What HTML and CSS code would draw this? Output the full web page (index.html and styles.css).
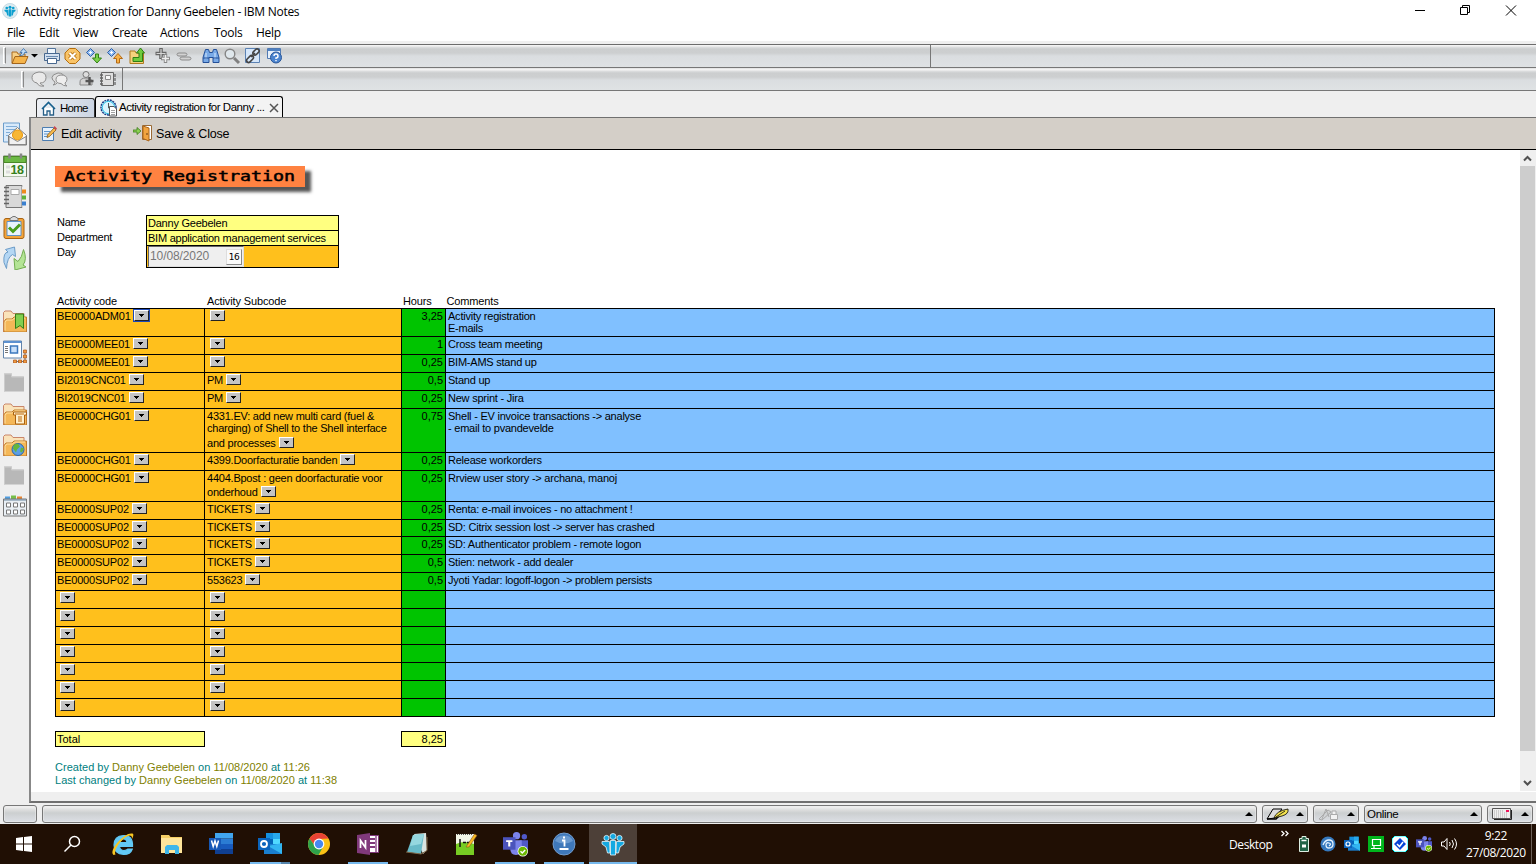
FILE: index.html
```html
<!DOCTYPE html>
<html lang="en">
<head>
<meta charset="utf-8">
<title>Activity registration for Danny Geebelen - IBM Notes</title>
<link rel="stylesheet" href="styles.css">
</head>
<body>
<svg class="defs" width="0" height="0">
  <symbol id="notes" viewBox="0 0 24 24">
    <circle cx="12" cy="4.500" r="3"/><circle cx="5.500" cy="6" r="2.600"/><circle cx="18.500" cy="6" r="2.600"/>
    <path d="M9.500 8.500h5v14.500h-5zM1 9.500h7.500L9 21H6.500L5 15 1 12zM23 9.500h-7.500L15 21h2.500L19 15l4-3z"/>
  </symbol>
  <symbol id="outlook" viewBox="0 0 24 24">
    <path fill="#1490df" d="M8 1h14v13H8z"/><path fill="#28a8ea" d="M15 1h7v6h-7z"/><path fill="#50d9ff" d="M15 7h7v6h-7z"/><path fill="#0364b8" d="M8 7h7v6H8z"/>
    <path fill="#1a7fd0" d="M6 12l18 0v10H6z"/><path fill="#32b5f1" d="M24 11v11L10 14z"/>
    <path fill="#0a64bd" d="M0 6h12v12H0z"/><circle cx="6" cy="12" r="3" fill="none" stroke="#fff" stroke-width="1.800"/>
  </symbol>
  <symbol id="teams" viewBox="0 0 24 24">
    <circle cx="13" cy="3.500" r="3.500" fill="#7b83eb"/><circle cx="20.500" cy="4.500" r="2.600" fill="#5059c9"/>
    <path fill="#5059c9" d="M16 8h8v7q0 4-4 4h-4z"/><path fill="#7b83eb" d="M7 8h11v8q0 6-5.500 6T7 16z"/>
    <path fill="#4b53bc" d="M0 5h12v12H0z"/><path fill="#fff" d="M3 8h6v1.700H7V14H5V9.700H3z"/>
    <circle cx="19" cy="18.500" r="5" fill="#fff"/><circle cx="19" cy="18.500" r="4.300" fill="#6bb700"/><path d="M16.800 18.500l1.700 1.700 2.800-3" fill="none" stroke="#fff" stroke-width="1.300"/>
  </symbol>
  <symbol id="folder" viewBox="0 0 24 24">
    <path d="M.5 23.500V4L2 2.500h6L10 5h11v18z" fill="#fae3ba" stroke="#c9866a"/>
    <path d="M1 23.500V13l2-2.500h6L11 8.500h12.500v15z" fill="#f4b757" stroke="#c17c2c"/><path d="M2 22V14l1.500-2.500H9.500l2-2H22" fill="none" stroke="#ffe2a6"/>
  </symbol>
  <symbol id="grayfolder" viewBox="0 0 24 24"><path d="M1 3h8v3h12v15H1z" fill="#b8b8b8"/><path d="M1.500 21V3.500h7v3h12" fill="none" stroke="#ccc"/></symbol>
</svg>

<header class="titlebar">
  <svg class="applogo" width="16" height="16" viewBox="0 0 16 16"><circle cx="8" cy="8" r="7.500" fill="#dcebf1" stroke="#c5dbe4"/><use href="#notes" x="2" y="2" width="12" height="12" fill="#0c9fcf"/></svg>
  <span class="ui apptitle">Activity registration for Danny Geebelen - IBM Notes</span>
  <svg class="winbtns" width="120" height="22" viewBox="0 0 120 22" fill="none" stroke="#000"><path d="M0 9.500h10M45.500 6.500h7v7h-7zM47.500 6.500v-2h7v7h-2"/><path d="M91 4.500l10 10M101 4.500l-10 10"/></svg>
</header>
<nav class="menu ui"><span>File</span><span>Edit</span><span>View</span><span>Create</span><span>Actions</span><span>Tools</span><span>Help</span></nav>

<div class="toolbar first">
  <i class="grip"></i>
  <svg class="t-open" width="18" height="18" viewBox="0 0 18 18"><path d="M1 16V5h5l1 2h7v9z" fill="#f6cf86" stroke="#a96a20"/><path d="M1 16.500l3-7h13l-3 7z" fill="#f5b44b" stroke="#a3651c"/><path d="M8.500 8.500h2q3 0 3-3h2.500L12.500 1.500 9 5.500h2q0 1.500-2.500 3z" fill="#bfdcf7" stroke="#3569a6" stroke-width=".8"/></svg>
  <svg class="t-arr" width="8" height="18"><path d="M0 7h7L3.500 10.500z" fill="#000"/></svg>
  <svg class="t-print" width="18" height="18" viewBox="0 0 18 18"><path d="M4.500 7V1.500h8V7" fill="#eef5fc" stroke="#55759b"/><path d="M1.500 6.500h15v7h-15z" fill="#d3e0ef" stroke="#48688f"/><path d="M4.500 11.500h9v5h-9z" fill="#fff" stroke="#48688f"/><path d="M3 9.500h12" stroke="#6a8ab0"/></svg>
  <svg class="t-stop" width="18" height="18" viewBox="0 0 18 18"><path d="M5.500 1.500h6l4.500 4.500v6l-4.500 4.500h-6L1 12V6z" fill="#f9c468" stroke="#b56f0f"/><path d="M5.500 6l6 6M11.500 6l-6 6" stroke="#b56f0f" stroke-width="3.800"/><path d="M5.500 6l6 6M11.500 6l-6 6" stroke="#fff" stroke-width="2"/></svg>
  <svg class="t-dn" width="18" height="18" viewBox="0 0 18 18"><path d="M5.500 1.500l4 4-4 4-4-4z" fill="#8fbaf0" stroke="#2d5fa8"/><path d="M4 5.500h3M5.500 4v3" stroke="#fff"/><path d="M10.500 7h3v4H16.500L12 16 7.500 11h3z" fill="#7cd04b" stroke="#328014"/></svg>
  <svg class="t-up" width="18" height="18" viewBox="0 0 18 18"><path d="M5.500 1.500l4 4-4 4-4-4z" fill="#8fbaf0" stroke="#2d5fa8"/><path d="M4 5.500h3M5.500 4v3" stroke="#fff"/><path d="M10.500 16h3v-4.500H16.500L12 6.500 7.500 11.500h3z" fill="#f8b247" stroke="#b46a15"/></svg>
  <svg class="t-gf" width="18" height="18" viewBox="0 0 18 18"><path d="M2 16.500V4h5l1 2h7.500v10.500z" fill="#f5d27d" stroke="#b07a20"/><path d="M5 14.500v-4h6V6H8.500l4-5L16.500 6h-2v8.500z" fill="#6fcb3c" stroke="#2e7d14"/></svg>
  <svg class="t-plus" width="18" height="18" viewBox="0 0 18 18"><path d="M7 1v11M1.500 6.500h11" stroke="#666" stroke-width="3.600"/><path d="M7 2v9M2.500 6.500h9" stroke="#d5d5d5" stroke-width="1.200"/><path d="M11.500 7v9M7 11.500h9" stroke="#888" stroke-width="3.400"/><path d="M11.500 8v7M8 11.500h7" stroke="#eee" stroke-width="1.600"/></svg>
  <svg class="t-minus" width="18" height="18" viewBox="0 0 18 18"><path d="M2 7.500q0-1.500 2-1.500h6q2 0 2 1.500T10 9H4Q2 9 2 7.500zM5 11.500q0-1.500 2-1.500h7q2 0 2 1.500T14 13H7q-2 0-2-1.500z" fill="#d2d2d2" stroke="#8a8a8a"/></svg>
  <svg class="t-bino" width="18" height="18" viewBox="0 0 18 18"><path d="M3.500 2.500h3l1 3h3l1-3h3l2.500 8v5h-6v-5h-4v5H1v-5z" fill="#78a9e6" stroke="#234f98"/><path d="M4 6v6M13 6v6" stroke="#d7e9fd"/><path d="M1 11h6M11 11h6" stroke="#234f98"/></svg>
  <svg class="t-mag" width="18" height="18" viewBox="0 0 18 18"><circle cx="7" cy="7" r="4.800" fill="#dfe7ec" stroke="#858585" stroke-width="1.400"/><path d="M11 11l5 5" stroke="#808080" stroke-width="3"/></svg>
  <svg class="t-link" width="18" height="18" viewBox="0 0 18 18"><path d="M1.500 1.500h14v14h-14z" fill="#d6e7fa" stroke="#5b82b4"/><g fill="none" stroke="#444" stroke-width="1.600"><rect x="8.500" y="3" width="7" height="4" rx="2" transform="rotate(-45 12 5)"/><rect x="2" y="10" width="8" height="4" rx="2" transform="rotate(-45 6 12)"/><path d="M7 10l4-4"/></g></svg>
  <svg class="t-help" width="18" height="18" viewBox="0 0 18 18"><path d="M1.500 1.500h13v10h-13z" fill="#e5effa" stroke="#517ab3"/><path d="M2 3h12" stroke="#4f81c2" stroke-width="2"/><circle cx="10" cy="10.500" r="5.500" fill="#4b84cf" stroke="#2a5798"/><path d="M8 9q0-2 2-2t2 2-2 2v1M10 13v1.300" fill="none" stroke="#fff" stroke-width="1.400"/></svg>
</div>
<div class="toolbar second">
  <i class="grip"></i>
  <svg width="18" height="18" viewBox="0 0 18 18"><path d="M9 2q7 0 7 5.500T10 13q1 2 4 3-5 1-7-3Q2 12 2 7.500T9 2z" fill="#e9e9e9" stroke="#8d8d8d"/></svg>
  <svg class="s2" width="18" height="18" viewBox="0 0 18 18"><path d="M8 3q6 0 6 4.500T8 12q-2 3-5 3 2-1 2-3-3-1.500-3-4.500T8 3z" fill="#e0e0e0" stroke="#8d8d8d"/><path d="M11 5q6 0 6 4.500 0 2-2 3.500 0 2 2 3-4 0-6-2.500-5 0-5-4T11 5z" fill="#eee" stroke="#8d8d8d"/></svg>
  <svg class="s3" width="18" height="18" viewBox="0 0 18 18"><circle cx="8" cy="4.500" r="3" fill="#ddd" stroke="#777"/><path d="M2 15v-3q0-4 6-4t6 4v3z" fill="#d3d3d3" stroke="#888"/><path d="M11.500 7v8M7.500 11h8" stroke="#555" stroke-width="2.400"/></svg>
  <svg class="s4" width="18" height="18" viewBox="0 0 18 18"><path d="M2.500 2.500h12v13h-12z" fill="#dedede" stroke="#666"/><path d="M6.500 5.500h5v4h-5z" fill="#f8f8f8" stroke="#888"/><path d="M1 5h3M1 8h3M1 11h3M1 14h3M16 4v3M16 8v3M16 12v3" stroke="#666" stroke-width="1.300"/></svg>
</div>

<main class="window">
  <div class="tabs">
    <div class="tab home"><svg width="15" height="15" viewBox="0 0 15 15"><path d="M2.500 7v7h3.500v-4h3v4h3.500V7" fill="#fff" stroke="#265f88" stroke-width="1.300"/><path d="M1 8l6.500-6.500L14 8" fill="none" stroke="#17608e" stroke-width="1.600"/></svg><span>Home</span></div>
    <div class="tab current"><svg width="18" height="18" viewBox="0 0 18 18"><circle cx="8.500" cy="8.500" r="7.500" fill="#d8f4ff" stroke="#1a3c86" stroke-width="1.500" stroke-dasharray="2 .8"/><circle cx="8.500" cy="8.500" r="6.200" fill="none" stroke="#28bfe5"/><path d="M8.500 4v5l3 2" fill="none" stroke="#555"/><path d="M9.500 7.500h4.500l2.500 2.500v7h-7z" fill="#fff" stroke="#555"/><path d="M11 11.500h4M11 13.500h4M11 15.500h4" stroke="#888" stroke-width=".8"/></svg><span>Activity registration for Danny ...</span><svg class="close" width="10" height="10" viewBox="0 0 10 10"><path d="M1 1l8 8M9 1L1 9" stroke="#555" stroke-width="1.500"/></svg></div>
  </div>
  <aside class="side">
    <svg viewBox="0 0 24 24"><path d="M.5.500h16v19H.5z" fill="#d9eafa" stroke="#6c9dcb"/><path d="M3 4h11M3 7h9M3 10h4M3 13h3" stroke="#80add8"/><path d="M5.500 13L14.500 5 23.500 13v9.500h-18z" fill="#fff" stroke="#777"/><circle cx="14.500" cy="12.500" r="5" fill="#f8b735" stroke="#e8950a"/><path d="M6 14l8.500 5 8.500-5v8H6z" fill="#f1f1f1" stroke="#888"/></svg>
    <svg viewBox="0 0 24 24"><path d="M.5 2.500h23v21H.5z" fill="#f4f9f0" stroke="#6a7f60"/><path d="M1 3h22v6H1z" fill="#6cb944" stroke="#4b8a27"/><path d="M6.500 0v5M18 0v5" stroke="#888" stroke-width="2.500"/><path d="M3 12h4v3H3zM3 17h4v3H3z" fill="#ddd"/><text class="day18" x="7.500" y="20.500">18</text></svg>
    <svg viewBox="0 0 24 24"><path d="M3 1h16v22H3z" fill="#d9d9d9" stroke="#777"/><path d="M20 2v20" stroke="#eee" stroke-width="2"/><path d="M8 5h8v5H8z" fill="#fff" stroke="#aaa"/><path d="M1 3h5M1 7h5M1 11h5M1 15h5M1 19h5" stroke="#666" stroke-width="1.500"/><path d="M19 5h4v4h-4z" fill="#ee8a1d"/><path d="M19 11h4v4h-4z" fill="#5eb23a"/><path d="M19 17h4v4h-4z" fill="#3b80cf"/></svg>
    <svg viewBox="0 0 24 24"><rect x="1" y="3" width="20" height="20" rx="2" fill="#f3a33a" stroke="#a86313"/><path d="M4 6h14v14H4z" fill="#eaf4fd" stroke="#6192c5"/><path d="M7 5V3l3-2h2l3 2v2z" fill="#ddd" stroke="#777"/><path d="M6 12l4 4 7-7" fill="none" stroke="#4a9e1e" stroke-width="3"/></svg>
    <svg viewBox="0 0 24 24"><path d="M1 16Q0 6 5 5.500L2.500 3 11.500.500 12.500 10 9.500 8Q4 11 3.500 22z" fill="#b5d7f4" stroke="#6c9cc8"/><path d="M20.500 3q4 10-.5 15.500l3 2L12 23.500 11 12l4 3q4-4 5.500-12z" fill="#b4e495" stroke="#73ad50"/></svg>
    <i></i>
    <svg viewBox="0 0 24 24"><use href="#folder"/><path d="M12.500 5.500h8V20l-3.500-3-4.500 3z" fill="#83cf50" stroke="#337e17"/></svg>
    <svg viewBox="0 0 24 24"><path d="M.5 1.500h18v17H.5z" fill="#fff" stroke="#6284ab"/><path d="M1 2.500h17" stroke="#5d91d0" stroke-width="2"/><path d="M2 7h3M2 9h3M2 11h3M2 13h3" stroke="#777"/><path d="M7.500 6.500h7v7h-7z" fill="#c9e0fa" stroke="#3d78bd" stroke-width="1.500"/><path d="M22 12v10H12" fill="none" stroke="#777"/><path d="M20.500 10.500h3v3h-3zM20.500 15.500h3v3h-3zM20.500 20.500h3v3h-3zM15.500 20.500h3v3h-3zM10.500 20.500h3v3h-3z" fill="#f39a3d" stroke="#a8551a" stroke-width=".7"/></svg>
    <svg viewBox="0 0 24 24"><use href="#grayfolder"/></svg>
    <svg viewBox="0 0 24 24"><use href="#folder"/><path d="M10.500 10.500h13v3h-2v9h-9v-9h-2z" fill="#fff0cd" stroke="#a96011"/><path d="M12 12.500h9M15 15.500h4M15 17.500h4M15 19.500h4" stroke="#bf6b0c"/></svg>
    <svg viewBox="0 0 24 24"><use href="#folder"/><circle cx="15" cy="17" r="6" fill="#5c9ee5" stroke="#2c65a6"/><path d="M11 12l4-1 2 3-3 3-1 3-3-4zM18 15l3 1-2 4-2-1z" fill="#66b63b"/></svg>
    <svg viewBox="0 0 24 24"><use href="#grayfolder"/></svg>
    <svg viewBox="0 0 24 24"><path d="M2 2h5v3H2z" fill="#4f9de0"/><path d="M8 1h5v4H8z" fill="#76be48"/><path d="M14 2h5v3h-5z" fill="#e68433"/><path d="M.5 4.500h23v17H.5z" fill="#eaf0f5" stroke="#777"/><path d="M1 5.500h22" stroke="#66839e"/><path d="M3.500 8.500h4v4h-4zM10.500 8.500h4v4h-4zM17.500 8.500h4v4h-4zM3.500 15.500h4v4h-4zM10.500 15.500h4v4h-4zM17.500 15.500h4v4h-4z" fill="#fff" stroke="#777"/></svg>
  </aside>
  <section class="pane">
    <div class="actions">
      <svg width="16" height="16" viewBox="0 0 16 16"><path d="M1.500 1.500h11v13h-11z" fill="#e5f1fc" stroke="#4d7db0"/><path d="M3 5.500h6M3 8h5M3 10.500h4" stroke="#5c95cf"/><path d="M6 11.500L6.500 9 13 2l2 2-6.500 6.500z" fill="#f6b94c" stroke="#8a5c1c" stroke-width=".8"/><path d="M12.500 1.500l1-1.500L16 2.500l-1 1.500z" fill="#cc4653"/></svg>
      <span class="edit">Edit activity</span>
      <svg class="door" width="19" height="17" viewBox="0 0 19 17"><path d="M0 5h4V2.500l4 3.500-4 3.500V7H0z" fill="#8ad152" stroke="#3c7b1b" stroke-width=".8"/><path d="M9.500.500h9v14h-9z" fill="#fff" stroke="#9b6a35"/><path d="M10 1l6 2v13L10 13.500z" fill="#f2a43e" stroke="#aa641a"/><path d="M14 8v2" stroke="#663b0c"/></svg>
      <span class="save">Save &amp; Close</span>
    </div>
    <div class="scroller">
      <article class="doc">
        <h1><span>Activity Registration</span></h1>
        <div class="form">
          <div class="labels"><div>Name</div><div>Department</div><div>Day</div></div>
          <div class="values"><div class="v1">Danny Geebelen</div><div class="v2">BIM application management services</div><div class="dayrow"><div class="date"><span>10/08/2020</span><b>16</b></div></div></div>
        </div>
        <div class="heads"><span>Activity code</span><span>Activity Subcode</span><span>Hours</span><span>Comments</span></div>
        <div class="grid">
          <div class="row h28"><div class="code adm">BE0000ADM01<i class="dd focus"></i></div><div><i class="dd"></i></div><div>3,25</div><div>Activity registration<br>E-mails</div></div>
          <div class="row"><div class="code">BE0000MEE01<i class="dd"></i></div><div><i class="dd"></i></div><div>1</div><div>Cross team meeting</div></div>
          <div class="row"><div class="code">BE0000MEE01<i class="dd"></i></div><div><i class="dd"></i></div><div>0,25</div><div>BIM-AMS stand up</div></div>
          <div class="row"><div class="code">BI2019CNC01<i class="dd"></i></div><div>PM<i class="dd"></i></div><div>0,5</div><div>Stand up</div></div>
          <div class="row"><div class="code">BI2019CNC01<i class="dd"></i></div><div>PM<i class="dd"></i></div><div>0,25</div><div>New sprint - Jira</div></div>
          <div class="row h44"><div class="code">BE0000CHG01<i class="dd"></i></div><div>4331.EV: add new multi card (fuel &amp;<br>charging) of Shell to the Shell interface<p>and processes<i class="dd"></i></p></div><div>0,75</div><div>Shell - EV invoice transactions -&gt; analyse<br>- email to pvandevelde</div></div>
          <div class="row"><div class="code">BE0000CHG01<i class="dd"></i></div><div>4399.Doorfacturatie banden<i class="dd"></i></div><div>0,25</div><div>Release workorders</div></div>
          <div class="row h31"><div class="code">BE0000CHG01<i class="dd"></i></div><div>4404.Bpost : geen doorfacturatie voor<p class="near">onderhoud<i class="dd"></i></p></div><div>0,25</div><div>Rrview user story -&gt; archana, manoj</div></div>
          <div class="row"><div class="code">BE0000SUP02<i class="dd"></i></div><div>TICKETS<i class="dd"></i></div><div>0,25</div><div>Renta: e-mail invoices - no attachment !</div></div>
          <div class="row h17"><div class="code">BE0000SUP02<i class="dd"></i></div><div>TICKETS<i class="dd"></i></div><div>0,25</div><div>SD: Citrix session lost -&gt; server has crashed</div></div>
          <div class="row"><div class="code">BE0000SUP02<i class="dd"></i></div><div>TICKETS<i class="dd"></i></div><div>0,25</div><div>SD: Authenticator problem - remote logon</div></div>
          <div class="row"><div class="code">BE0000SUP02<i class="dd"></i></div><div>TICKETS<i class="dd"></i></div><div>0,5</div><div>Stien: network - add dealer</div></div>
          <div class="row"><div class="code">BE0000SUP02<i class="dd"></i></div><div>553623<i class="dd"></i></div><div>0,5</div><div>Jyoti Yadar: logoff-logon -&gt; problem persists</div></div>
          <div class="row"><div><i class="dd"></i></div><div><i class="dd"></i></div><div></div><div></div></div>
          <div class="row"><div><i class="dd"></i></div><div><i class="dd"></i></div><div></div><div></div></div>
          <div class="row"><div><i class="dd"></i></div><div><i class="dd"></i></div><div></div><div></div></div>
          <div class="row"><div><i class="dd"></i></div><div><i class="dd"></i></div><div></div><div></div></div>
          <div class="row"><div><i class="dd"></i></div><div><i class="dd"></i></div><div></div><div></div></div>
          <div class="row"><div><i class="dd"></i></div><div><i class="dd"></i></div><div></div><div></div></div>
          <div class="row"><div><i class="dd"></i></div><div><i class="dd"></i></div><div></div><div></div></div>
        </div>
        <div class="total"><div>Total</div><div>8,25</div></div>
        <div class="audit">
          <div>Created by <em>Danny Geebelen</em> on <em>11/08/2020</em> at <em>11:26</em></div>
          <div>Last changed by <em>Danny Geebelen</em> on <em>11/08/2020</em> at <em>11:38</em></div>
        </div>
      </article>
      <div class="scrollbar">
        <svg width="15" height="16" viewBox="0 0 15 16"><path d="M4 10.500l3.500-3.500 3.500 3.500" fill="none" stroke="#505050" stroke-width="2"/></svg>
        <div class="thumb"></div>
        <svg width="15" height="16" viewBox="0 0 15 16"><path d="M4 6l3.500 3.500L11 6" fill="none" stroke="#505050" stroke-width="2"/></svg>
      </div>
    </div>
  </section>
</main>

<div class="status">
  <div class="c1"></div>
  <div class="c2"><i class="up"></i></div>
  <div class="c3"><svg width="24" height="14" viewBox="0 0 24 14"><path d="M1 12L7 2h9L9 11z" fill="#ddd" stroke="#000"/><path d="M1 12h9l3-3" fill="none" stroke="#000" stroke-width="1.500"/><path d="M8 11q2-7 14-9 1 5-6 7-4 1-8 2z" fill="#f4e34f" stroke="#000" stroke-width=".8"/><path d="M10 10l9-6" stroke="#000" stroke-width=".8"/></svg><i class="up"></i></div>
  <div class="c3"><svg width="24" height="14" viewBox="0 0 24 14" fill="none" stroke="#aaa"><path d="M2 12l9-9 3 2-9 8zM5 12L9 2l3 8"/><path d="M13.500 7.500h7v5h-7zM15 7V4h4v3" fill="#f2f2f2"/></svg><i class="up"></i></div>
  <div class="c5"><span>Online</span><i class="up"></i></div>
  <div class="c3"><svg width="24" height="14" viewBox="0 0 24 14"><path d="M1.500 1.500h18v10h-18z" fill="#eee" stroke="#555"/><path d="M3 4h10M3 6h14M3 8h14M3 10h14" stroke="#aaa" stroke-dasharray="1 1"/><path d="M3 12.500h17.500V3" fill="none" stroke="#222"/><path d="M15 3h3v2h-3z" fill="#ed155b"/></svg><i class="up"></i></div>
</div>

<footer class="taskbar ui">
  <div class="task start"><svg width="16" height="16" viewBox="0 0 16 16" fill="#fff"><path d="M0 2l7-1v6.500H0zM8 1l8-1v7.500H8zM0 8.500h7V15l-7-1zM8 8.500h8V16l-8-1z"/></svg></div>
  <div class="task search"><svg width="18" height="18" viewBox="0 0 18 18" fill="none" stroke="#fff" stroke-width="1.500"><circle cx="11.500" cy="6.500" r="5"/><path d="M8 10l-6.500 6.500"/></svg></div>
  <div class="task"><svg width="24" height="24" viewBox="0 0 24 24"><path d="M21.500 14.500H8.500q.4 4 4.500 4 2.500 0 4-1.500h4.300Q19.500 22.500 12.700 22.500 3 22 3 13T12.500 3.500 21.500 14.500zM8.500 10.500h7.500q-.5-3.500-3.500-3.500t-4 3.500z" fill="#62c9f5" stroke="#62c9f5" stroke-width="1.200"/><path d="M2.500 23Q-1 20 6 11 15 .500 21.500 1.500q2 .8-.5 5.500.5-3-2-3.500-4 0-10 7-6.500 8-4.500 12z" fill="#f7c623"/></svg></div>
  <div class="task"><svg width="24" height="24" viewBox="0 0 24 24"><path d="M1 3h8l1.500 2H22v16H1z" fill="#f6cf65"/><path d="M1 6h21v15H1z" fill="#ffe59b"/><path d="M5 22v-7l2-2h10l2 2v7h-4v-4H9v4z" fill="#3fb6ea"/></svg></div>
  <div class="task"><svg width="24" height="24" viewBox="0 0 24 24"><path fill="#41a5ee" d="M6 1h18v5.500H6z"/><path fill="#2b7cd3" d="M6 6.500h18V12H6z"/><path fill="#185abd" d="M6 12h18v5H6z"/><path fill="#103f91" d="M6 17h18v5H6z"/><path fill="#1658b6" d="M0 6h12v12H0z"/><path d="M2.500 8.500l1.700 6L6 9l1.800 5.500 1.700-6" fill="none" stroke="#fff" stroke-width="1.500"/></svg></div>
  <div class="task open group"><svg width="24" height="24"><use href="#outlook"/></svg></div>
  <div class="task"><svg width="24" height="24" viewBox="0 0 24 24"><circle cx="12" cy="12" r="11" fill="#fbc116"/><path d="M2.500 6.500A11 11 0 0 1 21.500 6.500L12 7 8 14z" fill="#e94335"/><path d="M2.500 6.500A11 11 0 0 0 11.500 23l4.800-8.500L8 14z" fill="#2ea24c"/><circle cx="12" cy="12" r="5.400" fill="#fff"/><circle cx="12" cy="12" r="4.200" fill="#4688f1"/></svg></div>
  <div class="task open"><svg width="24" height="24" viewBox="0 0 24 24"><path fill="#fff" stroke="#80397b" d="M13 3.500h9.500v17H13z"/><path d="M14 7h5M14 11h5M14 15h5" stroke="#80397b" stroke-width="1.800"/><path d="M20 4v16" stroke="#80397b" stroke-width="1.300"/><path fill="#80397b" d="M1 3l13-2v22L1 21z"/><path d="M4.500 16V8.500l5 7V8" fill="none" stroke="#fff" stroke-width="1.700"/></svg></div>
  <div class="task"><svg width="24" height="24" viewBox="0 0 24 24"><path d="M9 2l12-1 1 17-4 4z" fill="#d9e4e1"/><path d="M8 3l11-1-3 20-14-2z" fill="#68bac8"/><path d="M8 3l11-1-3 10-11 2z" fill="#95d7df"/><path d="M1 20l15 2 6-3.500V5" stroke="#806849" fill="none"/></svg></div>
  <div class="task"><svg width="24" height="24" viewBox="0 0 24 24"><path d="M2 2h18v21H2z" fill="#f1f5e7"/><path d="M2 12q9-4 18 0v11H2z" fill="#77cc23"/><path d="M3 2.500h16" stroke="#555" stroke-dasharray="1 1"/><path d="M6 7v8M9 10.500h3M13 10.500h3" stroke="#111" stroke-width="1.500"/><path d="M12 15L20.500 2l2.500 1.500L15 15z" fill="#f8b923" stroke="#89511b" stroke-width=".6"/></svg></div>
  <div class="task open"><svg width="25" height="25"><use href="#teams"/></svg></div>
  <div class="task open"><svg width="24" height="24" viewBox="0 0 24 24"><circle cx="12" cy="12" r="11" fill="#3f78ba" stroke="#729bcb"/><path d="M3 9a9.500 8 0 0 1 18 0q-9 5-18 0z" fill="#6898ce"/><path d="M10 8.500h2.500v6M7.500 17h9" fill="none" stroke="#fff" stroke-width="1.800"/><path d="M11 4.500h2v2h-2z" fill="#fff"/></svg></div>
  <div class="task open active"><svg width="24" height="24" fill="#14a9e2" stroke="#e8f7fc" stroke-width=".8"><use href="#notes"/></svg></div>
  <div class="tray">
    <span class="desk">Desktop</span>
    <svg class="chev" width="10" height="8" viewBox="0 0 10 8" fill="none" stroke="#fff" stroke-width="1.300"><path d="M1.500 1l2.500 2.500L1.500 6M5.500 1L8 3.500 5.500 6"/></svg>
    <svg width="16" height="16" viewBox="0 0 16 16"><path d="M6 .500h4v2h2.500v13h-9v-13H6z" fill="#226347" stroke="#ddeee3"/><path d="M5.500 4.500h5" stroke="#fff" stroke-width="1.500"/><path d="M6 8.500h4v3H6z" fill="#fff"/></svg>
    <svg width="16" height="16" viewBox="0 0 16 16"><circle cx="8" cy="8" r="7.500" fill="#3578bd"/><path d="M3 9q2-5 6-5 4 0 4 4t-4 4q-3 0-3-3t3-2 0 3" fill="none" stroke="#e5f3ff" stroke-width="1.300"/></svg>
    <svg width="16" height="16"><use href="#outlook"/></svg>
    <svg width="16" height="16" viewBox="0 0 16 16"><path d="M0 0h16v16H0z" fill="#00b51c"/><path d="M4.500 3.500h8v6h-8zM3 12.500h10M6 9.500v3" fill="none" stroke="#fff" stroke-width="1.200"/></svg>
    <svg width="16" height="16" viewBox="0 0 16 16"><path d="M3 0h10l3 3v10l-3 3H3l-3-3V3z" fill="#fff" stroke="#0ff"/><path d="M8 2l6 6-6 6-6-6z" fill="#0645d7"/><path d="M5 8l2.500 2.500L11 6" fill="none" stroke="#fff" stroke-width="1.500"/></svg>
    <svg width="16" height="16"><use href="#teams"/></svg>
    <svg width="18" height="16" viewBox="0 0 18 16" fill="none" stroke="#fff"><path d="M1.500 6H4l3-3.500v11L4 10H1.500zM9.500 6q1.500 2 0 4M12 4q3 4 0 8M14.500 2.500q4 5.500 0 11"/></svg>
    <div class="clock"><div>9:22</div><div>27/08/2020</div></div>
  </div>
</footer>
</body>
</html>
```

FILE: styles.css
```css
* { box-sizing: border-box; }
body { margin: 0; width: 1536px; height: 864px; overflow: hidden; background: #efefef; color: #000; font: 12px/15px "Liberation Sans", Arial, sans-serif; display: flex; flex-direction: column; }
svg { display: block; flex: none; }
.defs { position: absolute; }
.ui { font-family: "Open Sans", "Noto Sans", sans-serif; }

.titlebar { height: 24px; flex: none; background: #fff; display: flex; align-items: center; padding-left: 2px; }
.apptitle { margin-left: 5px; letter-spacing: -0.28px; white-space: nowrap; padding-bottom: 1px; }
.applogo { margin-bottom: 2px; }
.winbtns { margin-left: auto; margin-right: 1px; }
.menu { height: 17px; flex: none; background: #fff; padding-left: 7px; display: grid; grid-template-columns: 32px 34px 39px 48px 54px 42px 60px; line-height: 17px; letter-spacing: -0.3px; }

.toolbar { height: 23px; flex: none; display: flex; align-items: center; border-bottom: 1px solid #777; background: linear-gradient(#e6e6e6 0 1px, #f3f3f3 1px 2px, #dedfe0 3px, #cccecf 5px, #cdcfd0 9px, #dadde0 12px, #dfe2e4); }
.first { height: 27px; border-top: 3px solid #efefef; box-shadow: inset 0 1px #6c6c6c; width: 100%; background-clip: padding-box; }
.first::after { content: ""; width: 1px; height: 22px; background: #777; margin-left: 646px; }
.grip { width: 3px; height: 17px; border: 1px solid #fff; border-right-color: #888; flex: none; }
.first .grip { margin-left: 3px; margin-right: 5px; }
.t-open { margin-right: -1px; }
.t-arr { margin-left: 3px; }
.t-print { margin-left: 4px; }
.t-stop, .t-dn, .t-up { margin-left: 3px; }
.t-gf { margin-left: 4px; }
.t-plus { margin-left: 8px; }
.t-minus { margin-left: 3px; }
.t-bino { margin-left: 9px; }
.t-mag, .t-link { margin-left: 3px; }
.t-help { margin-left: 4px; }
.second { padding-left: 21px; }
.second .grip { margin-right: 6px; }
.s2 { margin-left: 2px; }
.s3 { margin-left: 10px; }
.s4 { margin-left: 3px; }
.second::after { content: ""; width: 1px; height: 22px; background: #777; margin-left: 5px; }

.window { flex: none; height: 712px; display: grid; grid-template: 26px 1fr / 29px 1fr; }
.tabs { grid-column: 1 / 3; display: flex; align-items: flex-end; padding-left: 36px; font-size: 11.5px; letter-spacing: -0.48px; }
.tab { display: flex; align-items: center; border: 1px solid #333; border-bottom: 0; border-radius: 3px 3px 0 0; white-space: nowrap; padding-top: 1px; }
.home { width: 59px; height: 19px; padding-left: 4px; background: linear-gradient(90deg, #eef0f4, #ccd5e3); }
.home span { margin-left: 4px; letter-spacing: -0.8px; }
.home span { letter-spacing: -0.75px; }
.current { width: 188px; height: 21px; padding-left: 4px; background: #f3f3f3; border-color: #000; }
.current span { margin-left: 1px; }
.close { margin-left: auto; margin-right: 3px; }
.side { display: flex; flex-direction: column; padding: 1.500px 0 0 3px; }
.side > * { height: 31px; width: 24px; flex: none; padding: 3.500px 0; }
.day18 { font: bold 12.500px "Liberation Sans", sans-serif; fill: #35801b; letter-spacing: -0.5px; }

.pane { border: 2px solid #707070; border-left-color: #888; border-right: 0; height: 686px; display: flex; flex-direction: column; border-top-width: 1px; }
.actions { height: 32px; flex: none; background: #d4cfc8; border-bottom: 1px solid #000; display: flex; align-items: center; padding-left: 10px; font-size: 12.5px; letter-spacing: -0.2px; }
.edit { width: 72px; margin-left: 4px; white-space: nowrap; padding-top: 2px; }
.save { margin-left: 4px; padding-top: 2px; }
.scroller { height: 643px; flex: none; background: #fff; display: flex; border-bottom: 1px solid #efefef; }
.scrollbar { width: 16px; background: #efefef; height: 641px; display: flex; flex-direction: column; }
.thumb { width: 15px; height: 585px; margin-bottom: 24px; background: #cdcdcd; }

.doc { flex: 1; padding-left: 24px; padding-top: 16px; font-size: 11px; line-height: 12px; letter-spacing: -0.23px; white-space: nowrap; }
h1 { margin: 0; width: 250px; height: 21px; background: #ff8241; box-shadow: 6px 5px 3px #555; padding-left: 9px; font: 14px/21px "DejaVu Sans Mono", monospace; letter-spacing: 0; -webkit-text-stroke: 0.5px #000; }
h1 span { display: inline-block; transform: scaleX(1.305); transform-origin: 0 0; }
.form { margin-top: 28px; display: flex; line-height: 15px; }
.labels { width: 91px; padding-left: 2px; }
.values { width: 193px; border: 1px solid #000; background: #000; display: grid; grid-template-rows: 14px 14px 21px; row-gap: 1px; }
.values > div { padding-left: 1px; background: #ffff80; }
.values .dayrow { background: #ffc01c; }
.date { width: 96px; height: 21px; background: #efefef; border: 1px solid #666; border-right-color: #ddd; border-bottom-color: #ddd; color: #777; display: flex; align-items: center; padding-left: 1px; font-size: 12px; letter-spacing: -0.1px; }
.date b { width: 16px; height: 16px; margin: 0 1px 0 auto; border: 1px solid #ddd; border-right-color: #888; border-bottom-color: #888; background: #fafafa; color: #000; font: 9px/14px "DejaVu Sans", sans-serif; letter-spacing: -0.5px; text-align: center; }
.heads { margin-top: 26px; height: 14px; line-height: 14px; padding-left: 2px; display: grid; grid-template-columns: 150px 196px 43.500px 200px; letter-spacing: -0.13px; }
.grid { width: 1440px; border-bottom: 1px solid #000; border-right: 1px solid #000; }
.row { height: 18px; border-top: 1px solid #000; display: grid; grid-template-columns: 149px 197px 44px 1fr; }
.h28 { height: 28px; } .h44 { height: 44px; } .h31 { height: 31px; } .h17 { height: 17px; }
.row > div { border-left: 1px solid #000; background: #ffc01c; padding: 1px 1px 0; }
.row > div:nth-child(3) { background: #00c400; text-align: right; padding-right: 2px; letter-spacing: 0; }
.row > div:nth-child(4) { background: #80c0ff; padding-left: 2px; }
.row > div:nth-child(2) { padding-left: 2px; }
.row p { margin: 3px 0 0; }
.row .near { margin-top: 2px; }
.row .code { letter-spacing: -0.2px; }
.dd { display: inline-block; width: 15px; height: 11px; margin-left: 3px; vertical-align: -1px; border: 1px solid; border-color: #fff #222 #222 #fff; background: linear-gradient(#000, #000) 4px 3px / 5px 1px no-repeat, linear-gradient(#000, #000) 5px 4px / 3px 1px no-repeat, linear-gradient(#000, #000) 6px 5px / 1px 1px no-repeat, #c4c4c4; }
.focus { outline: 1px solid #1c48b8; outline-offset: 0; }
.total { margin-top: 14px; display: flex; gap: 196px; line-height: 14px; letter-spacing: 0; }
.total div { height: 16px; width: 150px; border: 1px solid #000; background: #ffff80; padding: 0 1px; }
.total div + div { width: 45px; text-align: right; padding-right: 2px; }
.audit { margin-top: 14px; line-height: 13px; color: #008080; letter-spacing: 0.02px; }
.audit em { font-style: normal; color: #808000; }

.status { height: 21px; flex: none; display: flex; gap: 5px; padding: 2px 0 0 3px; }
.status > div { height: 18px; border: 1px solid #777; border-radius: 3px; background: linear-gradient(#efefef 1px, #dcdddd 4px, #cccfd0 7px, #dcdfe5); display: flex; align-items: center; padding: 0 3px 0 3px; box-shadow: inset 0 0 0 1px #eeeeee80; }
.status .c1 { width: 34px; } .status .c2 { width: 1215px; } .status .c3 { width: 46px; } .status .c5 { width: 118px; padding-left: 2px; font-size: 11.5px; letter-spacing: -0.3px; }
.up { margin-left: auto; border: 4px solid transparent; border-top: 0; border-bottom-color: #000; }

.taskbar { height: 40px; flex: none; background: #200f04; display: flex; color: #fff; }
.task { width: 48px; margin-right: 1px; display: flex; align-items: center; justify-content: center; }
.start { margin-right: 0; } .search { margin-right: 3px; }
.open { background: linear-gradient(#76b9ed, #76b9ed) center bottom / 40px 2px no-repeat; }
.group { background: linear-gradient(90deg, #76b9ed 31px, #5584ab 31px) center bottom / 40px 2px no-repeat; }
.active { background: linear-gradient(#76b9ed, #76b9ed) center bottom / 48px 2px no-repeat, #4d4038; }
.tray { margin-left: auto; display: flex; align-items: center; gap: 8px; border-right: 1px solid #6b5f57; margin-right: 4px; width: 303px; letter-spacing: -0.4px; }
.desk { width: 43px; }
.chev { margin: 0 -2px 21px 0; }
.clock { margin-left: auto; margin-right: 6px; text-align: center; line-height: 17px; padding-bottom: 1px; }
```
